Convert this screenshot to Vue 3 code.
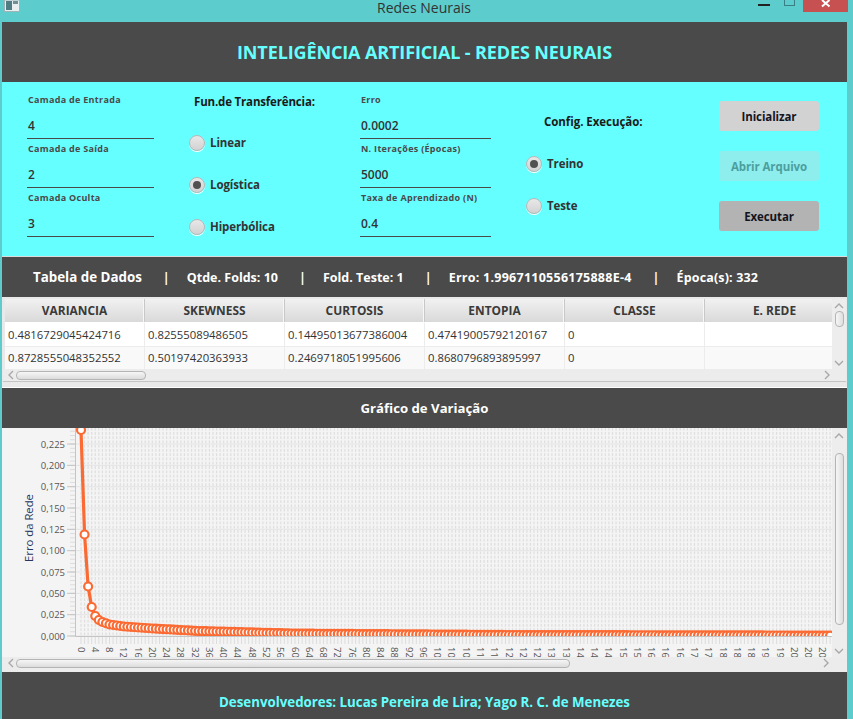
<script setup>
const fieldsA = [
  { label: 'Camada de Entrada', value: '4' },
  { label: 'Camada de Saída', value: '2' },
  { label: 'Camada Oculta', value: '3' }
]
const fieldsB = [
  { label: 'Erro', value: '0.0002' },
  { label: 'N. Iterações (Épocas)', value: '5000' },
  { label: 'Taxa de Aprendizado (N)', value: '0.4' }
]
const transfer = [
  { label: 'Linear', on: false },
  { label: 'Logística', on: true },
  { label: 'Hiperbólica', on: false }
]
const modes = [
  { label: 'Treino', on: true },
  { label: 'Teste', on: false }
]
const stats = [
  { text: 'Tabela de Dados', cls: 'st-main' },
  { text: 'Qtde. Folds: 10', cls: '' },
  { text: 'Fold. Teste: 1', cls: '' },
  { text: 'Erro: 1.9967110556175888E-4', cls: 'st-err' },
  { text: 'Época(s): 332', cls: 'st-epoch' }
]
const columns = ['VARIANCIA', 'SKEWNESS', 'CURTOSIS', 'ENTOPIA', 'CLASSE', 'E. REDE']
const rows = [
  ['0.4816729045424716', '0.82555089486505', '0.14495013677386004', '0.47419005792120167', '0', ''],
  ['0.8728555048352552', '0.50197420363933', '0.2469718051995606', '0.8680796893895997', '0', '']
]

const X0 = 81
const STEP = 3.567
const Y0 = 636
const UNIT = 21.33
const xAt = (i) => X0 + i * STEP

const knots = [[0, 206], [1, 101.5], [2, 49.5], [3, 29], [4, 20], [5, 16], [6, 14], [8, 11.5], [12, 9.5], [20, 7.5], [33, 5], [60, 2.4], [120, 1], [210, 0.4]]
const offsetAt = (i) => {
  for (let k = 1; k < knots.length; k++) {
    if (i <= knots[k][0]) {
      const [a, b] = knots[k - 1]
      const [c, d] = knots[k]
      return b + ((d - b) * (i - a)) / (c - a)
    }
  }
  return 0.4
}
const points = Array.from({ length: 211 }, (_, i) => ({ i, x: xAt(i), y: Y0 - offsetAt(i) }))
const linePath = points.map((p) => `${p.x.toFixed(2)},${p.y.toFixed(2)}`).join(' ')

const vGrid = Array.from({ length: 211 }, (_, i) => xAt(i))
const hGrid = Array.from({ length: 50 }, (_, i) => Y0 - (i * UNIT) / 5).filter((y) => y > 428)
const yLabels = Array.from({ length: 10 }, (_, i) => ({
  y: Y0 - i * UNIT,
  text: (i * 0.025).toFixed(3).replace('.', ',')
}))
const xLabels = Array.from({ length: 53 }, (_, k) => {
  const i = k * 4
  return { x: xAt(i), text: i >= 100 ? String(Math.floor(i / 10)) : String(i) }
})
</script>

<template>
  <div class="window">
    <div class="titlebar">
      <div class="tb-left">
        <svg width="16" height="12" viewBox="0 0 16 12">
          <rect x="0.5" y="0" width="15" height="11.5" fill="#e8eef0" stroke="#9fb4b8" />
          <rect x="2" y="1" width="6" height="9" fill="#4f7d83" />
          <rect x="9" y="1" width="5" height="3" fill="#6f8f96" />
        </svg>
      </div>
      <div class="tb-title">Redes Neurais</div>
      <div class="tb-right">
        <span class="tb-min"></span>
        <span class="tb-max"></span>
        <span class="tb-close">
          <svg width="10" height="8" viewBox="0 0 10 8">
            <path d="M1 0 L8.5 6.5 M8.5 0 L1 6.5" stroke="#fff" stroke-width="2" fill="none" />
          </svg>
        </span>
      </div>
    </div>

    <div class="content">
      <header class="head">INTELIGÊNCIA ARTIFICIAL - REDES NEURAIS</header>

      <section class="config">
        <div class="fields">
          <div v-for="f in fieldsA" :key="f.label" class="field">
            <div class="f-label">{{ f.label }}</div>
            <div class="f-value">{{ f.value }}</div>
          </div>
        </div>

        <div class="radios radios-a">
          <div class="r-title">Fun.de Transferência:</div>
          <div class="r-list">
            <div v-for="r in transfer" :key="r.label" class="radio">
              <span class="r-dot" :class="{ on: r.on }"></span>
              <span class="r-text">{{ r.label }}</span>
            </div>
          </div>
        </div>

        <div class="fields">
          <div v-for="f in fieldsB" :key="f.label" class="field">
            <div class="f-label">{{ f.label }}</div>
            <div class="f-value">{{ f.value }}</div>
          </div>
        </div>

        <div class="radios radios-b">
          <div class="r-title">Config. Execução:</div>
          <div class="r-list">
            <div v-for="r in modes" :key="r.label" class="radio">
              <span class="r-dot" :class="{ on: r.on }"></span>
              <span class="r-text">{{ r.label }}</span>
            </div>
          </div>
        </div>

        <div class="buttons">
          <div class="btn">Inicializar</div>
          <div class="btn disabled">Abrir Arquivo</div>
          <div class="btn active">Executar</div>
        </div>
      </section>

      <section class="statbar">
        <template v-for="(s, i) in stats" :key="s.text">
          <span v-if="i > 0" class="sep">|</span>
          <span :class="s.cls">{{ s.text }}</span>
        </template>
      </section>

      <section class="tablewrap">
        <div class="tablebody">
          <div class="table">
            <div class="t-row t-head">
              <div v-for="c in columns" :key="c" class="t-cell">{{ c }}</div>
            </div>
            <div v-for="(r, ri) in rows" :key="ri" class="t-row" :class="ri % 2 ? 'odd' : 'even'">
              <div v-for="(v, ci) in r" :key="ci" class="t-cell">{{ v }}</div>
            </div>
          </div>
          <div class="vbar vbar-table">
            <svg class="chev" width="10" height="6" viewBox="0 0 10 6"><path d="M1 5 L5 1 L9 5" /></svg>
            <span class="vthumb vthumb-table"></span>
            <svg class="chev chev-end" width="10" height="6" viewBox="0 0 10 6"><path d="M1 1 L5 5 L9 1" /></svg>
          </div>
        </div>
        <div class="hbar">
          <svg class="chev" width="6" height="10" viewBox="0 0 6 10"><path d="M5 1 L1 5 L5 9" /></svg>
          <span class="hthumb hthumb-table"></span>
          <svg class="chev chev-right" width="6" height="10" viewBox="0 0 6 10"><path d="M1 1 L5 5 L1 9" /></svg>
        </div>
      </section>

      <section class="subhead">Gráfico de Variação</section>

      <section class="chartwrap">
        <div class="chartbody">
          <svg class="chart" width="830" height="229" viewBox="2 428 830 229">
            <defs>
              <clipPath id="plot-clip">
                <rect x="76" y="428" width="756" height="208" />
              </clipPath>
            </defs>
            <rect x="2" y="428" width="830" height="229" fill="#f4f4f4" />
            <g stroke="#dedede" stroke-width="1.2">
              <line v-for="(x, i) in vGrid" :key="'v' + i" :x1="x" :x2="x" y1="428" :y2="Y0" />
            </g>
            <g stroke="#f4f4f4" stroke-width="1.5">
              <line v-for="(y, i) in hGrid" :key="'h' + i" x1="76" x2="832" :y1="y" :y2="y" />
            </g>
            <g stroke="#e4e4e4" stroke-width="1">
              <line v-for="l in yLabels" :key="'m' + l.y" x1="76" x2="832" :y1="l.y" :y2="l.y" />
            </g>

            <g stroke="#dcdcdc" stroke-width="1">
              <line v-for="(y, i) in hGrid" :key="'yt' + i" x1="70" x2="75" :y1="y" :y2="y" />
              <line v-for="(x, i) in vGrid" :key="'xt' + i" :x1="x" :x2="x" y1="637" y2="644" />
            </g>
            <g stroke="#c4c4c4" stroke-width="1">
              <line x1="75.5" x2="75.5" y1="428" y2="636.5" />
              <line x1="75" x2="832" y1="636.5" y2="636.5" />
              <line v-for="l in yLabels" :key="'yM' + l.y" x1="67" x2="75" :y1="l.y" :y2="l.y" />
            </g>

            <text
              v-for="l in yLabels"
              :key="l.text"
              class="ytext"
              x="65"
              :y="l.y + 3.5"
              text-anchor="end"
            >{{ l.text }}</text>
            <text class="ytitle" transform="translate(33 528) rotate(-90)" text-anchor="middle">Erro da Rede</text>
            <text
              v-for="(l, i) in xLabels"
              :key="'xl' + i"
              class="xtext"
              :transform="`translate(${l.x - 3.5} 647) rotate(90)`"
            >{{ l.text }}</text>

            <g clip-path="url(#plot-clip)">
              <polyline :points="linePath" fill="none" stroke="#fb6a32" stroke-width="3.2" />
              <circle
                v-for="p in points"
                :key="p.i"
                :cx="p.x"
                :cy="p.y"
                r="4"
                fill="#ffffff"
                stroke="#fb6a32"
                stroke-width="2.2"
              />
            </g>
          </svg>
          <div class="vbar vbar-chart">
            <svg class="chev" width="10" height="6" viewBox="0 0 10 6"><path d="M1 5 L5 1 L9 5" /></svg>
            <span class="vthumb vthumb-chart"></span>
            <svg class="chev chev-end" width="10" height="6" viewBox="0 0 10 6"><path d="M1 1 L5 5 L9 1" /></svg>
          </div>
        </div>
        <div class="hbar hbar-chart">
          <svg class="chev" width="6" height="10" viewBox="0 0 6 10"><path d="M5 1 L1 5 L5 9" /></svg>
          <span class="hthumb hthumb-chart"></span>
          <svg class="chev chev-right" width="6" height="10" viewBox="0 0 6 10"><path d="M1 1 L5 5 L1 9" /></svg>
        </div>
      </section>

      <footer class="foot">Desenvolvedores: Lucas Pereira de Lira; Yago R. C. de Menezes</footer>
    </div>
  </div>
</template>

<style>
html, body { margin: 0; background: #5ccccc; }
</style>

<style scoped>
.window {
  width: 853px;
  height: 719px;
  overflow: hidden;
  background: #5ccccc;
  font-family: "Open Sans", "Noto Sans", sans-serif;
  color: #333;
}
.titlebar {
  height: 22px;
  display: grid;
  grid-template-columns: 1fr auto 1fr;
}
.tb-left { padding-left: 4px; line-height: 0; }
.tb-title { font-size: 14px; line-height: 16px; color: #333; padding-right: 5px; }
.tb-right {
  display: flex;
  justify-content: flex-end;
  align-items: flex-start;
  padding-right: 5px;
}
.tb-min { width: 12px; height: 2px; background: #222; margin: 4px 14px 0 0; }
.tb-max {
  width: 9px;
  height: 5px;
  border: 1px solid #3a7f85;
  border-top: 0;
  margin-right: 8px;
}
.tb-close {
  width: 45px;
  height: 12px;
  background: #c75050;
  display: flex;
  justify-content: center;
  line-height: 0;
}
.content { width: 845px; margin-left: 2px; }
.head {
  height: 60px;
  background: #4a4a4a;
  color: #66ffff;
  font-size: 18px;
  font-weight: 700;
  line-height: 60px;
  text-align: center;
  letter-spacing: -0.12px;
}
.config {
  height: 174px;
  background: #66ffff;
  border-bottom: 1px solid #dcdcdc;
  padding-left: 25px;
  display: grid;
  grid-template-columns: 160px 173px 165px 194px 100px;
}
.fields { width: 131px; padding-top: 8px; }
.fields:first-child { width: 127px; }
.field { height: 48px; border-bottom: 1px solid #4a4a4a; }
.f-label {
  height: 21px;
  padding-left: 1px;
  font-size: 9px;
  font-weight: 700;
  line-height: 20px;
  color: #4a4a4a;
  letter-spacing: 0.3px;
}
.f-value {
  padding-left: 1px;
  font-size: 12px;
  font-weight: 600;
  line-height: 29px;
  color: #333;
}
.radios { font-size: 11.5px; font-weight: 700; letter-spacing: -0.1px; }
.radios-a { padding-top: 11px; padding-left: 2px; }
.radios-b { padding-top: 31px; padding-left: 1px; }
.r-title { line-height: 18px; color: #1a1a1a; margin-bottom: 22px; padding-left: 5px; letter-spacing: -0.17px; }
.radios-b .r-title { padding-left: 18px; margin-bottom: 23px; letter-spacing: -0.05px; }
.r-list { display: flex; flex-direction: column; gap: 22px; }
.radio { display: flex; align-items: center; height: 20px; gap: 5px; color: #333; }
.r-text { padding-bottom: 2px; }
.r-dot {
  width: 14px;
  height: 14px;
  border: 1px solid #b9b9b9;
  border-radius: 50%;
  background: linear-gradient(#e8e8e8, #d2d2d2);
  box-shadow: 0 1px 0 #ffffff;
  display: flex;
  align-items: center;
  justify-content: center;
}
.r-dot.on::after {
  content: "";
  width: 8px;
  height: 8px;
  border-radius: 50%;
  background: #515151;
}
.buttons {
  padding-top: 19px;
  display: flex;
  flex-direction: column;
  gap: 20px;
}
.btn {
  width: 100px;
  height: 30px;
  border-radius: 3px;
  background: #d2d2d2;
  color: #14141e;
  font-size: 11.5px;
  font-weight: 700;
  line-height: 32px;
  letter-spacing: -0.1px;
  text-align: center;
}
.btn.disabled { background: #8eeded; color: #4c9e9e; }
.btn.active { background: #b3b3b3; }
.statbar {
  height: 40px;
  background: #4a4a4a;
  color: #fff;
  font-size: 12.5px;
  font-weight: 700;
  padding-left: 31px;
  display: flex;
  align-items: center;
  gap: 21px;
}
.st-main { font-size: 13.35px; }
.st-err { letter-spacing: 0.25px; }
.st-epoch { letter-spacing: 0.15px; }
.sep { width: 3px; text-align: center; }
.tablewrap {
  height: 91px;
  background: #e9e9e9;
  padding: 2px 1px 0 1px;
  box-sizing: border-box;
  border-bottom: 1px solid #fff;
}
.tablebody { display: flex; height: 70px; }
.table { width: 827px; overflow: hidden; margin-left: 2px; background: #fff; }
.t-row { display: flex; font-size: 11.3px; color: #333; }
.t-cell {
  width: 140px;
  flex: none;
  box-sizing: border-box;
  padding-left: 3px;
  border-right: 1px solid #ececec;
  white-space: nowrap;
}
.t-head {
  height: 24px;
  background: linear-gradient(#f1f1f1, #d9d9d9);
  font-size: 11.9px;
  font-weight: 700;
  line-height: 23px;
  color: #3a3a3a;
  border-bottom: 1px solid #fff;
  box-sizing: border-box;
}
.t-head .t-cell {
  text-align: center;
  padding-left: 0;
  border-right: 1px solid #c8c8c8;
  box-shadow: inset -1px 0 0 #f7f7f7;
}
.even { height: 24px; line-height: 23px; background: #fff; border-bottom: 1px solid #ececec; box-sizing: border-box; }
.odd { height: 22px; line-height: 22px; background: #f9f9f9; }
.vbar {
  width: 14px;
  background: #ededed;
  display: flex;
  flex-direction: column;
  align-items: center;
  box-sizing: border-box;
}
.vbar-table { padding-top: 4px; padding-bottom: 3px; height: 70px; }
.vbar-chart { padding-top: 5px; padding-bottom: 3px; height: 229px; }
.chev { fill: none; stroke: #a8a8a8; stroke-width: 1.4; flex: none; }
.chev-end { margin-top: auto; }
.chev-right { margin-left: auto; }
.vthumb {
  width: 9px;
  border: 1px solid #b4b4b4;
  border-radius: 4px;
  background: linear-gradient(90deg, #f6f6f6, #dedede);
  box-sizing: border-box;
}
.vthumb-table { height: 16px; margin-top: 2px; }
.vthumb-chart { height: 172px; margin-top: 14px; }
.hbar {
  height: 12px;
  display: flex;
  align-items: center;
  padding: 0 16px 0 5px;
  background: #ececec;
  border-bottom: 1px solid #c4c4c4;
  box-sizing: content-box;
}
.hbar-chart { border-bottom: 0; padding: 0 18px 0 6px; }
.hthumb {
  height: 9px;
  border: 1px solid #b4b4b4;
  border-radius: 4px;
  background: linear-gradient(#f6f6f6, #dcdcdc);
  box-sizing: border-box;
  margin-left: 2px;
}
.hthumb-table { width: 130px; }
.hthumb-chart { width: 554px; }
.subhead {
  height: 40px;
  background: #4a4a4a;
  color: #fff;
  font-size: 13.2px;
  font-weight: 700;
  line-height: 41px;
  text-align: center;
}
.chartwrap {
  height: 244px;
  background: #ececec;
  box-sizing: border-box;
}
.chartbody { display: flex; height: 229px; }
.chart { display: block; flex: none; }
.ytext { font-size: 9.5px; fill: #555; font-family: "Open Sans", sans-serif; }
.xtext { font-size: 9.5px; fill: #555; font-family: "Open Sans", sans-serif; }
.ytitle { font-size: 11.3px; fill: #26365e; font-family: "Open Sans", sans-serif; }
.foot {
  height: 47px;
  background: #4a4a4a;
  color: #66ffff;
  font-size: 13.3px;
  font-weight: 700;
  line-height: 61px;
  text-align: center;
}
</style>
